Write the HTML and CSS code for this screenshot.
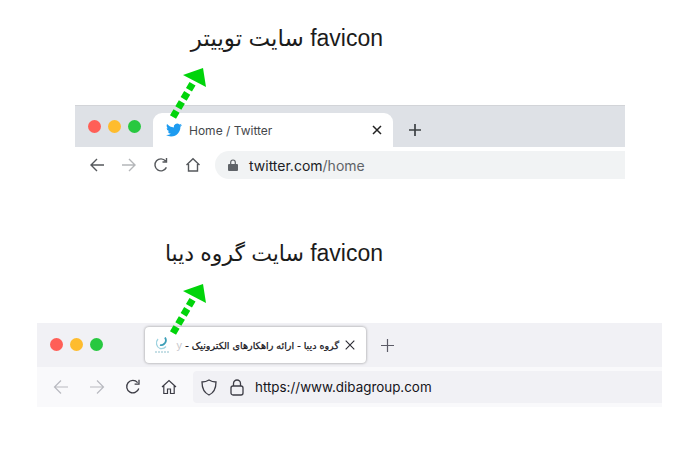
FILE: index.html
```html
<!DOCTYPE html>
<html lang="fa">
<head>
  <meta charset="UTF-8" />
  <title>favicon</title>
  <link rel="stylesheet" href="styles.css">
</head>
<body>
  <!-- Twitter -->
  <section class="demo demo-chrome">
    <h2 class="caption" dir="rtl"><span class="latin">favicon</span> سایت توییتر</h2>
    <svg class="arrow" width="40" height="52" viewBox="0 0 40 52">
      <line x1="5" y1="49" x2="25" y2="15" stroke="#00d40a" stroke-width="7" stroke-dasharray="7 3.5"/>
      <polygon points="35,0 15,7 38,19" fill="#00d40a"/>
    </svg>
    <div class="chrome">
      <div class="chrome-strip">
        <div class="lights">
          <i class="red"></i><i class="yellow"></i><i class="green"></i>
        </div>
        <div class="chrome-tab">
          <svg class="bird" width="16" height="16" viewBox="0 0 24 24"><path fill="#1d9bf0" d="M23.953 4.57a10 10 0 01-2.825.775 4.958 4.958 0 002.163-2.723c-.951.555-2.005.959-3.127 1.184a4.92 4.92 0 00-8.384 4.482C7.69 8.095 4.067 6.13 1.64 3.162a4.822 4.822 0 00-.666 2.475c0 1.71.87 3.213 2.188 4.096a4.904 4.904 0 01-2.228-.616v.06a4.923 4.923 0 003.946 4.827 4.996 4.996 0 01-2.212.085 4.936 4.936 0 004.604 3.417 9.867 9.867 0 01-6.102 2.105c-.39 0-.779-.023-1.17-.067a13.995 13.995 0 007.557 2.209c9.053 0 13.998-7.496 13.998-13.985 0-.21 0-.42-.015-.63A9.935 9.935 0 0024 4.59z"/></svg>
          <span class="chrome-title">Home / Twitter</span>
          <svg width="10" height="10" viewBox="0 0 10 10"><path d="M1 1l8 8M9 1l-8 8" stroke="#222" stroke-width="1.5" fill="none"/></svg>
        </div>
        <svg class="chrome-plus" width="12" height="12" viewBox="0 0 12 12"><path d="M6 0v12M0 6h12" stroke="#3c4043" stroke-width="1.7"/></svg>
      </div>
      <div class="chrome-bar">
        <svg class="tool" width="16" height="16" viewBox="0 0 16 16"><path d="M15 8H2M8 2L2 8l6 6" fill="none" stroke="#55585c" stroke-width="1.4"/></svg>
        <svg class="tool" width="16" height="16" viewBox="0 0 16 16"><path d="M1 8h13M8 2l6 6-6 6" fill="none" stroke="#b4b6b9" stroke-width="1.4"/></svg>
        <svg class="tool" width="16" height="16" viewBox="0 0 16 16"><path d="M13.4 10.4A6 6 0 1 1 12.6 4M13.5 1v4h-4" fill="none" stroke="#55585c" stroke-width="1.4"/></svg>
        <svg class="tool" width="16" height="16" viewBox="0 0 16 16"><path d="M1.5 8L8 1.8 14.5 8M3.5 7v7h9V7" fill="none" stroke="#55585c" stroke-width="1.4"/></svg>
        <div class="chrome-url">
          <svg width="10" height="12" viewBox="0 0 10 12"><path d="M1 5h8a1 1 0 0 1 1 1v5a1 1 0 0 1-1 1H1a1 1 0 0 1-1-1V6a1 1 0 0 1 1-1z" fill="#5f6368"/><path d="M2.7 5V3.3a2.3 2.3 0 0 1 4.6 0V5" fill="none" stroke="#5f6368" stroke-width="1.2"/></svg>
          <span class="host">twitter.com<em>/home</em></span>
        </div>
      </div>
    </div>
  </section>

  <!-- Diba group -->
  <section class="demo demo-fox">
    <h2 class="caption" dir="rtl"><span class="latin">favicon</span> سایت گروه دیبا</h2>
    <svg class="arrow" width="40" height="52" viewBox="0 0 40 52">
      <line x1="5" y1="49" x2="25" y2="15" stroke="#00d40a" stroke-width="7" stroke-dasharray="7 3.5"/>
      <polygon points="35,0 15,7 38,19" fill="#00d40a"/>
    </svg>
    <div class="fox">
      <div class="fox-strip">
        <div class="lights">
          <i class="red"></i><i class="yellow"></i><i class="green"></i>
        </div>
        <div class="fox-tab">
          <svg class="fox-icon" width="16" height="18" viewBox="0 0 16 18">
            <path d="M4 3a6 6 0 0 0 2 9.5 6 6 0 0 0 6-2" fill="none" stroke="#9fd3e0" stroke-width="1.3"/>
            <path d="M11 1.5a5 5 0 0 1-1 6.5 4 4 0 0 1-4 1" fill="none" stroke="#3c9fb8" stroke-width="1.8"/>
            <path d="M1 16h14" stroke="#8dbfcc" stroke-width="1" stroke-dasharray="2 1"/>
          </svg>
          <div class="fox-title" dir="rtl">گروه دیبا - ارائه راهکارهای الکترونیک - <span class="fade">y</span></div>
          <svg class="fox-close" width="10" height="10" viewBox="0 0 10 10"><path d="M.7.7l8.6 8.6M9.3.7L.7 9.3" stroke="#2b2a33" stroke-width="1.1" fill="none"/></svg>
        </div>
        <svg class="fox-plus" width="13" height="13" viewBox="0 0 13 13"><path d="M6.5 0v13M0 6.5h13" stroke="#5b5b66" stroke-width="1.2"/></svg>
      </div>
      <div class="fox-bar">
        <svg class="tool" width="16" height="16" viewBox="0 0 16 16"><path d="M15 8H1.5M8 1.5L1.5 8 8 14.5" fill="none" stroke="#b9bac0" stroke-width="1.2"/></svg>
        <svg class="tool" width="16" height="16" viewBox="0 0 16 16"><path d="M1 8h13.5M8 1.5L14.5 8 8 14.5" fill="none" stroke="#b9bac0" stroke-width="1.2"/></svg>
        <svg class="tool" width="16" height="16" viewBox="0 0 16 16"><path d="M13.8 9.5A6.2 6.2 0 1 1 12.6 3.6M14 .8v4.4H9.6" fill="none" stroke="#3d3d46" stroke-width="1.3"/></svg>
        <svg class="tool" width="16" height="16" viewBox="0 0 16 16"><path d="M1 8l7-6.5L15 8M2.8 6.5V14.5h3.7V10h3v4.5h3.7V6.5" fill="none" stroke="#3d3d46" stroke-width="1.2"/></svg>
        <div class="fox-url">
          <svg width="16" height="17" viewBox="0 0 16 17"><path d="M8 1c2 1.3 4.5 2 7 2 0 6-1.5 10.5-7 13C2.5 13.5 1 9 1 3c2.5 0 5-.7 7-2z" fill="none" stroke="#3d3d46" stroke-width="1.3"/></svg>
          <svg width="14" height="17" viewBox="0 0 14 17"><rect x="1" y="7" width="12" height="9" rx="2" fill="none" stroke="#3d3d46" stroke-width="1.3"/><path d="M3.5 7V4.5a3.5 3.5 0 0 1 7 0V7" fill="none" stroke="#3d3d46" stroke-width="1.3"/></svg>
          <span class="fox-host">https://www.dibagroup.com</span>
        </div>
      </div>
    </div>
  </section>
</body>
</html>
```

FILE: styles.css
```css
* { margin:0; padding:0; box-sizing:border-box; }
html, body { width:700px; height:450px; overflow:hidden; background:#FFF; }
body { font-family:"Liberation Sans", Arial, sans-serif; }

.demo { position:relative; }
.demo-chrome { height:216px; padding:25px 0 0 75px; }
.demo-fox { height:234px; padding:24px 0 0 37px; }
.demo .arrow { position:absolute; left:168px; top:68px; z-index:2; }

.caption {
  width:383px;
  font-family:"Liberation Sans", "DejaVu Sans", sans-serif;
  font-size:22px;
  font-weight:normal;
  line-height:26px;
  color:#1b1b1b;
}
.caption .latin { font-size:23px; }
.demo-chrome .caption { margin:0 0 54px -75px; font-size:23px; }
.demo-fox .caption { margin:0 0 56px -37px; }

.lights { display:flex; gap:7px; }
.lights i { display:block; width:13px; height:13px; border-radius:50%; }
.lights .red { background:#ff5f57; }
.lights .yellow { background:#febc2e; }
.lights .green { background:#28c840; }

.tool { flex:none; }

/* chrome */
.chrome { width:550px; }
.chrome-strip {
  height:42px;
  display:flex;
  align-items:flex-end;
  background:#dee1e6;
  border-top:1px solid #d2d4d8;
}
.chrome-strip .lights { align-self:flex-start; margin:14px 0 0 13px; }
.chrome-tab {
  width:240px;
  height:34px;
  margin-left:12px;
  padding:0 11px 0 13px;
  display:flex;
  align-items:center;
  background:#FFF;
  border-radius:9px 9px 0 0;
}
.chrome-title { flex:1; margin-left:7px; font-size:12px; color:#45484c; font-family:"Inter", sans-serif; }
.chrome-plus { margin:0 0 11px 16px; }
.chrome-bar { height:32px; display:flex; align-items:center; gap:16px; padding:4px 0 0 14px; background:#FFF; }
.chrome-url {
  flex:1;
  height:28px;
  margin-left:-2px;
  padding-left:13px;
  display:flex;
  align-items:center;
  gap:11px;
  background:#f1f3f4;
  border-radius:14px 0 0 14px;
}
.host { font-family:"Inter", sans-serif; font-size:14px; color:#202124; }
.host em { font-style:normal; color:#5f6368; }

/* firefox */
.fox { width:625px; }
.fox-strip { height:44px; display:flex; align-items:center; background:#f1f1f5; }
.fox-strip .lights { margin:0 0 1px 13px; }
.fox-tab {
  width:221px;
  height:36px;
  margin-left:42px;
  padding:0 11px 0 9px;
  display:flex;
  align-items:center;
  background:#FFF;
  border-radius:4px;
  box-shadow:0 0 3px rgba(0,0,0,0.4);
}
.fox-icon { flex:none; }
.fox-close { flex:none; }
.fox-title {
  flex:1;
  min-width:0;
  margin:0 6px 0 4px;
  white-space:nowrap;
  font-family:"DejaVu Sans", sans-serif;
  font-size:9.6px;
  -webkit-text-stroke:0.25px #15141a;
  color:#15141a;
}
.fox-title .fade { color:#c9c9cd; -webkit-text-stroke:0; font-family:"Liberation Sans", sans-serif; font-size:11px; }
.fox-plus { margin-left:15px; }
.fox-bar { height:40px; display:flex; align-items:center; gap:20px; padding-left:16px; background:#f9f9fb; }
.fox-url {
  flex:1;
  height:32px;
  margin-left:-4px;
  padding-left:8px;
  display:flex;
  align-items:center;
  gap:13px;
  background:#f1f1f5;
  border-radius:4px 0 0 4px;
}
.fox-host { margin-left:-2px; font-family:"Inter", sans-serif; font-size:13.4px; color:#15141a; }
```
